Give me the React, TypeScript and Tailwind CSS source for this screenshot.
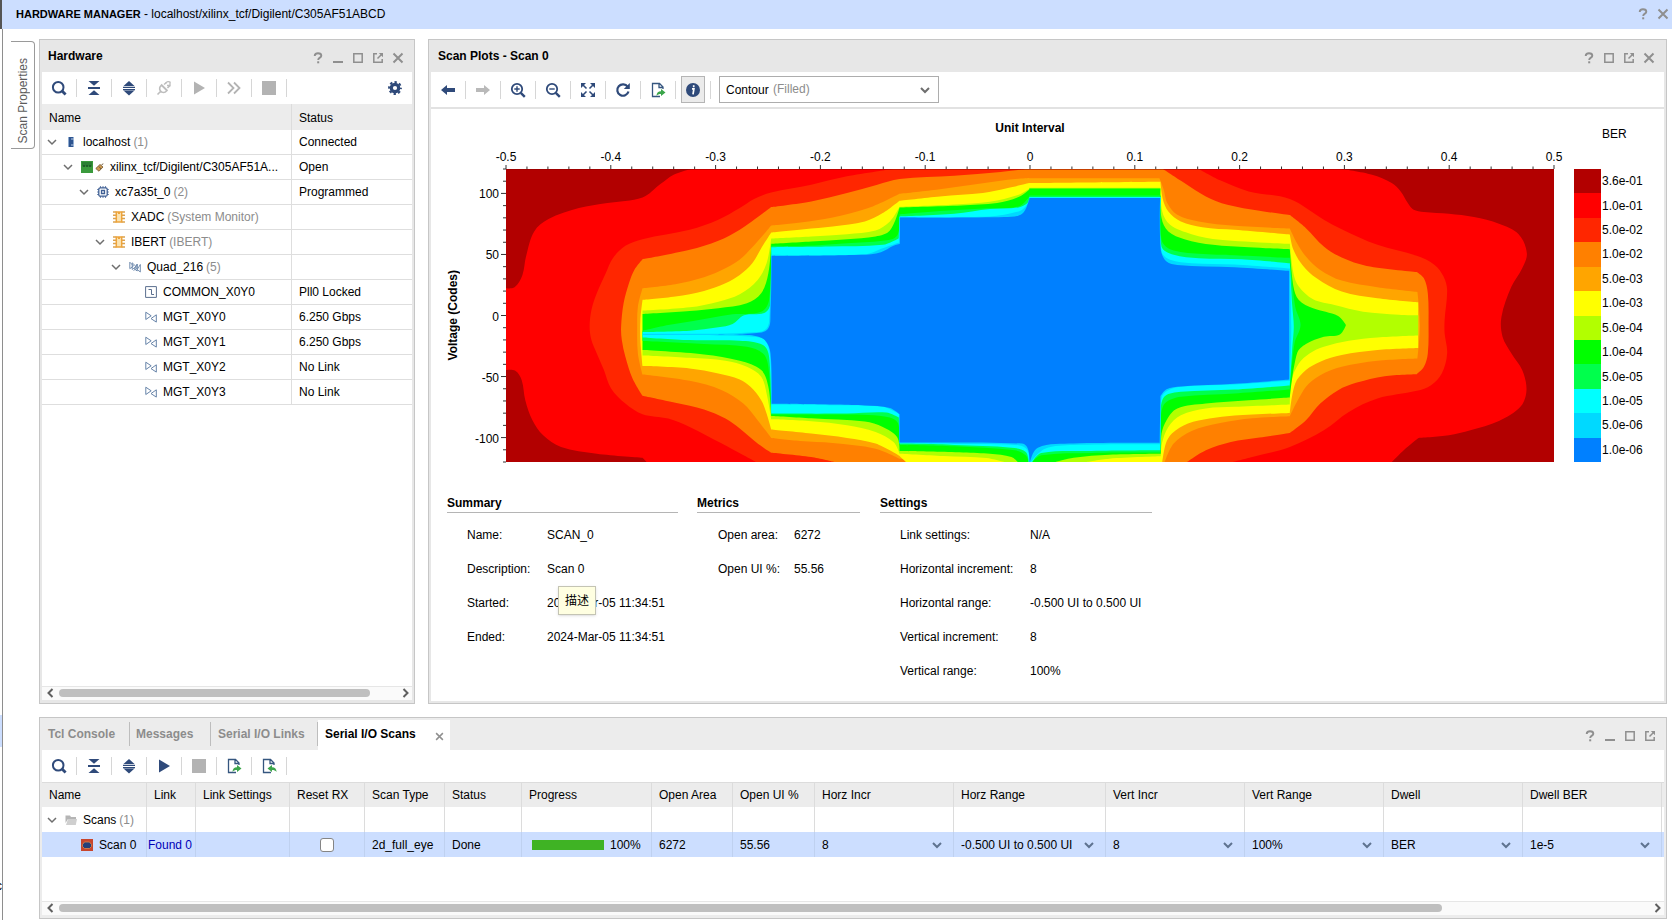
import React from "react";

/* ---------- icons ---------- */

const NAVY = "#2f4a7a";

function Svg({ size = 16, children }: { size?: number; children: React.ReactNode }) {
  return (
    <svg width={size} height={size} viewBox={`0 0 ${size} ${size}`} fill="none" aria-hidden="true" className="block shrink-0">
      {children}
    </svg>
  );
}

const SearchIcon = () => (
  <Svg>
    <circle cx="7.2" cy="7.2" r="5.3" stroke={NAVY} strokeWidth="2" />
    <path d="M10.800 10.800l3.800 3.800" stroke={NAVY} strokeWidth="2.800" />
  </Svg>
);
const CollapseIcon = () => (
  <Svg>
    <path d="M2.500 1h11l-5.500 4.800zM2.500 15h11l-5.500-4.800z" fill={NAVY} />
    <path d="M2 8h12" stroke={NAVY} strokeWidth="2" />
  </Svg>
);
const ExpandIcon = () => (
  <Svg>
    <path d="M2.500 6L8 1l5.500 5zM2.500 10.500L8 15.500l5.500-5z" fill={NAVY} />
    <path d="M2 7.300h12M2 9.600h12" stroke={NAVY} strokeWidth="1.300" />
  </Svg>
);
const LinkIcon = () => (
  <Svg>
    <path d="M5 4.500l6.500 6.500" stroke="#bdbdbd" strokeWidth="1.800" />
    <path d="M5.500 5.500C3.500 6.500 3 9 4.500 11s4.500 2 6 0M1.500 14.500l3-3M8 4.500L10.500 2.500M11.500 8L14 5.500" stroke="#bdbdbd" strokeWidth="1.600" />
    <path d="M9.500 3.500c1-2 3.500-2.500 5-.8M14 1.500v4h-3" stroke="#bdbdbd" strokeWidth="1.300" />
  </Svg>
);
const PlayIcon = ({ color }: { color: string }) => (
  <Svg>
    <path d="M3 1.500l11 6.500-11 6.500z" fill={color} />
  </Svg>
);
const FastIcon = () => (
  <Svg>
    <path d="M2 2.500L7.500 8 2 13.500M8 2.500L13.500 8 8 13.500" stroke="#b3b3b3" strokeWidth="1.800" />
  </Svg>
);
const StopIcon = () => (
  <Svg>
    <path d="M1 1h14v14H1z" fill="#b3b3b3" />
  </Svg>
);
const GearIcon = () => (
  <Svg>
    <circle cx="8" cy="8" r="3.700" stroke={NAVY} strokeWidth="3.200" />
    <circle cx="8" cy="8" r="5.900" stroke={NAVY} strokeWidth="2" strokeDasharray="2.400 2.234" strokeDashoffset="1.200" />
  </Svg>
);
const ArrowLeftIcon = () => (
  <Svg>
    <path d="M1 8l6-5v3h8v4H7v3z" fill={NAVY} />
  </Svg>
);
const ArrowRightIcon = () => (
  <Svg>
    <path d="M15 8L9 3v3H1v4h8v3z" fill="#b9b9b9" />
  </Svg>
);
const ZoomIcon = ({ plus }: { plus?: boolean }) => (
  <Svg>
    <circle cx="7" cy="7" r="5.200" stroke={NAVY} strokeWidth="1.800" />
    <path d="M10.800 10.800l4 4" stroke={NAVY} strokeWidth="2.400" />
    <path d={plus ? "M4.300 7h5.400M7 4.300v5.400" : "M4.300 7h5.400"} stroke={NAVY} strokeWidth="1.400" />
  </Svg>
);
const FitIcon = () => (
  <Svg>
    <path d="M1 1h5L1 6zM15 1v5l-5-5zM1 15v-5l5 5zM15 15h-5l5-5z" fill={NAVY} />
    <path d="M2.500 2.500l4 4M13.500 2.500l-4 4M2.500 13.500l4-4M13.500 13.500l-4-4" stroke={NAVY} strokeWidth="1.600" />
  </Svg>
);
const RefreshIcon = () => (
  <Svg>
    <path d="M12.700 4.800A5.700 5.700 0 1 0 13.500 9.500" stroke={NAVY} strokeWidth="2.200" />
    <path d="M14.800 1v6H8.800z" fill={NAVY} />
  </Svg>
);
const FileIcon = ({ into }: { into?: boolean }) => (
  <Svg>
    <path d="M13 7V5L9.500 1.500H2.500v13H10M9 1.500V5.500h4" stroke="#35567f" strokeWidth="1.300" />
    {into ? (
      <path d="M6.500 10.500l4.500-3.500v2.200c3 0 4.500 1.500 4.500 4.800-1-1.500-2.500-2-4.500-2v2z" fill="#3ba54a" />
    ) : (
      <path d="M15.500 10.500L11 7v2.200c-3 0-4.500 1.500-4.500 4.800 1-1.500 2.500-2 4.500-2v2z" fill="#3ba54a" />
    )}
  </Svg>
);
const InfoIcon = () => (
  <Svg>
    <circle cx="8" cy="8" r="7" fill={NAVY} />
    <path d="M7 6.800h1.900L8 12.300M8.700 3.200v2" stroke="#fff" strokeWidth="1.700" />
  </Svg>
);

const GRAY = "#8f8f8f";
const HelpIcon = ({ size = 12 }: { size?: number }) => (
  <svg width={size} height={size} viewBox="0 0 12 12" fill="none" aria-hidden="true">
    <path d="M2.700 4C2.700 2 4.100 1.200 6 1.200s3.300.9 3.300 2.500C9.300 5.700 6.200 5.600 6.200 8" stroke={GRAY} strokeWidth="1.900" />
    <path d="M5.200 9.300h2v2h-2z" fill={GRAY} />
  </svg>
);
const MinIcon = () => (
  <Svg size={12}>
    <path d="M1 10h10" stroke={GRAY} strokeWidth="2" />
  </Svg>
);
const MaxIcon = () => (
  <Svg size={12}>
    <path d="M1.800 1.800h8.400v8.400H1.800z" stroke={GRAY} strokeWidth="1.500" />
  </Svg>
);
const PopIcon = () => (
  <Svg size={12}>
    <path d="M5 1.800H1.800v8.400h8.400V7M5.500 6.500L9.500 2.500" stroke={GRAY} strokeWidth="1.500" />
    <path d="M6.800 1h4.200v4.200z" fill={GRAY} />
  </Svg>
);
const CloseIcon = ({ size = 12 }: { size?: number }) => (
  <svg width={size} height={size} viewBox="0 0 12 12" fill="none" aria-hidden="true">
    <path d="M1.500 1.500l9 9M10.500 1.500l-9 9" stroke={GRAY} strokeWidth="2" />
  </svg>
);
const ChevronIcon = ({ color = "#6e6e6e", width = 1.5 }: { color?: string; width?: number }) => (
  <Svg size={10}>
    <path d="M1 3l4 4 4-4" stroke={color} strokeWidth={width} />
  </Svg>
);

const HostIcon = () => (
  <Svg size={12}>
    <path d="M3 1h6v10H3z" fill="#8fabd0" />
    <path d="M4 1h4v10H4z" fill="#2f5590" />
    <path d="M6 3h3M6 9h3" stroke="#b9cde8" />
  </Svg>
);
const BoardIcon = () => (
  <Svg size={12}>
    <path d="M0 0h12v12H0z" fill="#3a9a3c" />
    <path d="M1 1h10v4.500H1z" fill="#2b7f33" />
    <path d="M2 5h2M5 5h2M8 5h2" stroke="#1c5326" strokeWidth="1.500" />
  </Svg>
);
const PlugIcon = () => (
  <Svg size={9}>
    <path d="M.8 5.500L5 1.500l3 2.500L4 8.200z" fill="#cf9a52" stroke="#7d6038" strokeWidth=".9" />
    <path d="M4 3.500l2 2.500M6.500 1.800L8.300.8" stroke="#6d5a3a" />
  </Svg>
);
const ChipIcon = () => (
  <Svg size={12}>
    <path d="M3.500.3v11.400M6 .3v11.400M8.500.3v11.400M.3 3.500h11.400M.3 6h11.400M.3 8.500h11.400" stroke="#3f5f94" strokeWidth="1.100" />
    <rect x="1.800" y="1.800" width="8.400" height="8.400" rx="1.500" fill="#fff" stroke="#3f5f94" strokeWidth="1.300" />
    <path d="M4.500 4.500h3v3h-3z" stroke="#3f5f94" strokeWidth="1.300" />
  </Svg>
);
const CoreIcon = () => (
  <Svg size={12}>
    <path d="M0 1h3.500M0 4.300h3.500M0 7.600h3.500M0 11h3.500M8.500 1H12M8.500 4.300H12M8.500 7.600H12M8.500 11H12" stroke="#dba24e" strokeWidth="1.500" />
    <path d="M3.300 1h5.400v10H3.300z" fill="#fbe3b0" stroke="#eda43c" strokeWidth="1.500" />
    <path d="M6 1v2" stroke="#eda43c" strokeWidth="2" />
  </Svg>
);
const QuadIcon = () => (
  <Svg size={12}>
    <path d="M.8 1.200v6.500L4.500 5zM3.200 1.800v6.700L7 5.500zM4.500 9.500L8 7V3.500M8.200 3v7L5.500 8zM11.300 3.500v7.500L8.200 8.500z" stroke="#6683a8" strokeWidth=".9" />
  </Svg>
);
const CommonIcon = () => (
  <Svg size={12}>
    <path d="M.6.6h10.800v10.800H.6zM3.500 3.500h3v5h2.500" stroke="#5b6f8f" strokeWidth="1" />
  </Svg>
);
const MgtIcon = () => (
  <Svg size={12}>
    <path d="M.8 1.200v7.300L6.200 4.800zM11.300 3.800v7.300L6 7.600z" stroke="#6683a8" strokeWidth="1" />
  </Svg>
);
const FolderIcon = () => (
  <Svg size={12}>
    <path d="M.5 1.500h4.500l1 1.500h5v2H3L.5 9z" fill="#b5b5b5" />
    <path d="M3 5h9l-1.200 6H1z" fill="#cfcfcf" />
  </Svg>
);
const ScanIcon = () => (
  <Svg size={12}>
    <path d="M0 0h12v12H0z" fill="#c8452c" />
    <path d="M1.500 5.500L3.500 3h5l2 2.500V7.500L8.500 9.500h-5l-2-2z" fill="#263f78" stroke="#e08a4c" strokeWidth=".8" />
  </Svg>
);

/* ---------- shared pieces ---------- */

function Tool({ label, children }: { label: string; children: React.ReactNode }) {
  return (
    <button type="button" aria-label={label} className="flex h-[18px] w-[35px] items-center justify-center border-r border-[#d6d6d6]">
      {children}
    </button>
  );
}

function WindowButtons({ items }: { items: string[] }) {
  const icons: Record<string, React.ReactNode> = {
    Help: <HelpIcon />,
    Minimize: <MinIcon />,
    Maximize: <MaxIcon />,
    Float: <PopIcon />,
    Close: <CloseIcon />,
  };
  return (
    <div className="flex gap-2 pt-1">
      {items.map((name) => (
        <button key={name} type="button" aria-label={name} className="flex size-3 items-center justify-center">
          {icons[name]}
        </button>
      ))}
    </div>
  );
}

function ScrollBar({ thumb }: { thumb: string }) {
  return (
    <div className="flex h-[14px] items-center border-t border-[#e6e6e6] bg-[#fafafa] pr-[2px] pb-px pl-1">
      <button type="button" aria-label="Scroll left" className="flex w-[13px] items-center">
        <svg width="8" height="10" viewBox="0 0 8 10" fill="none">
          <path d="M6.500 1l-4 4 4 4" stroke="#5f5f5f" strokeWidth="2" />
        </svg>
      </button>
      <div className="flex-1">
        <div className={`h-2 rounded-full bg-[#bfbfbf] ${thumb}`} />
      </div>
      <button type="button" aria-label="Scroll right" className="flex w-[13px] items-center justify-end">
        <svg width="8" height="10" viewBox="0 0 8 10" fill="none">
          <path d="M1.500 1l4 4-4 4" stroke="#5f5f5f" strokeWidth="2" />
        </svg>
      </button>
    </div>
  );
}

/* ---------- hardware tree ---------- */

type Node = { pad: string; open?: boolean; icon: React.ReactNode; name: string; note?: string; status?: string };

const TREE: Node[] = [
  { pad: "pl-[5px]", open: true, icon: <HostIcon />, name: "localhost", note: "(1)", status: "Connected" },
  {
    pad: "pl-[21px]",
    open: true,
    icon: (
      <span className="flex items-center gap-[2px]">
        <BoardIcon />
        <PlugIcon />
      </span>
    ),
    name: "xilinx_tcf/Digilent/C305AF51A...",
    status: "Open",
  },
  { pad: "pl-[37px]", open: true, icon: <ChipIcon />, name: "xc7a35t_0", note: "(2)", status: "Programmed" },
  { pad: "pl-[53px]", icon: <CoreIcon />, name: "XADC", note: "(System Monitor)" },
  { pad: "pl-[53px]", open: true, icon: <CoreIcon />, name: "IBERT", note: "(IBERT)" },
  { pad: "pl-[69px]", open: true, icon: <QuadIcon />, name: "Quad_216", note: "(5)" },
  { pad: "pl-[85px]", icon: <CommonIcon />, name: "COMMON_X0Y0", status: "Pll0 Locked" },
  { pad: "pl-[85px]", icon: <MgtIcon />, name: "MGT_X0Y0", status: "6.250 Gbps" },
  { pad: "pl-[85px]", icon: <MgtIcon />, name: "MGT_X0Y1", status: "6.250 Gbps" },
  { pad: "pl-[85px]", icon: <MgtIcon />, name: "MGT_X0Y2", status: "No Link" },
  { pad: "pl-[85px]", icon: <MgtIcon />, name: "MGT_X0Y3", status: "No Link" },
];

function TreeLabel({ pad, open, icon, name, note }: Node) {
  return (
    <div className={`flex items-center whitespace-nowrap ${pad}`}>
      {open ? (
        <button type="button" aria-label={`Collapse ${name}`} className="mr-2">
          <ChevronIcon />
        </button>
      ) : (
        <span className="mr-2 w-[10px]" />
      )}
      <span className="mr-[6px]">{icon}</span>
      <span>{name}</span>
      {note && <span className="ml-[3px] text-[#8c8c8c]">{note}</span>}
    </div>
  );
}

function HardwarePanel() {
  return (
    <section className="flex w-[376px] shrink-0 flex-col border border-[#c6c6c6] bg-[#e7e7e7] px-[2px] pb-[3px]">
      <header className="flex h-8 items-center justify-between pr-2 pl-[6px]">
        <h2 className="font-bold">Hardware</h2>
        <WindowButtons items={["Help", "Minimize", "Maximize", "Float", "Close"]} />
      </header>
      <div className="flex flex-1 flex-col bg-white">
        <div className="flex h-8 items-center">
          <Tool label="Search"><SearchIcon /></Tool>
          <Tool label="Collapse all"><CollapseIcon /></Tool>
          <Tool label="Expand all"><ExpandIcon /></Tool>
          <Tool label="Auto connect"><LinkIcon /></Tool>
          <Tool label="Run trigger"><PlayIcon color="#b3b3b3" /></Tool>
          <Tool label="Run immediate"><FastIcon /></Tool>
          <Tool label="Stop"><StopIcon /></Tool>
          <button type="button" aria-label="Settings" className="mr-[9px] ml-auto">
            <GearIcon />
          </button>
        </div>
        <table className="w-full table-fixed border-separate border-spacing-0">
          <colgroup>
            <col />
            <col className="w-[120px]" />
          </colgroup>
          <thead>
            <tr className="h-[26px] bg-[#ececec] text-left">
              <th className="border-r border-[#dcdcdc] pt-[2px] pb-0 pl-[7px] font-normal">Name</th>
              <th className="pt-[2px] pb-0 pl-[7px] font-normal">Status</th>
            </tr>
          </thead>
          <tbody>
            {TREE.map((n) => (
              <tr key={n.name} className="h-[25px]">
                <td className="border-r border-b border-[#dedede] p-0"><TreeLabel {...n} /></td>
                <td className="border-b border-[#dedede] p-0 pl-[7px]">{n.status}</td>
              </tr>
            ))}
          </tbody>
        </table>
        <div className="flex-1" />
        <ScrollBar thumb="w-[92%]" />
      </div>
    </section>
  );
}

/* ---------- contour plot ---------- */

/*
 * Each level is one closed outline running left-top, right, left-bottom.
 * A point marked * is a sharp corner; the others are smoothed.
 * The right part has its own origin, RIGHT units further along x.
 */
const RIGHT = 1484;

const LEVELS: { color: string; top: string; right: string; bottom: string }[] = [
  {
    color: "#ff0000",
    top: "46,445* 70,442 92,405 102,350 125,275 165,238 250,205 330,190 428,173 478,133 515,105 565,88*",
    right: "900,88* 985,105 1040,130 1065,155 1085,190 1100,209 1130,217 1200,222 1270,232 1340,252 1395,283 1418,340 1405,385 1375,440 1347,530 1350,590 1375,640 1405,690 1417,750 1400,800 1340,842 1260,870 1200,885 1115,893* 1075,928 1040,965*",
    bottom: "440,965* 428,952* 300,940 200,920 150,885 120,840 100,780 90,720 72,692 46,690*",
  },
  {
    color: "#ff2600",
    top: "280,560 285,510 300,460 325,400 345,355 380,318 428,298 560,270 640,240 700,205 740,178 788,158 900,135 1000,110 1130,88*",
    right: "500,88* 560,122 640,155 755,178 850,240 900,268 1000,315 1110,348 1160,375 1185,410 1195,450 1188,540 1188,580 1195,640 1180,700 1150,735 1110,752 1000,775 920,815 850,870 755,920 650,950 595,965*",
    bottom: "745,965* 650,910 560,860 500,835 428,822 380,790 340,745 320,690 300,640 285,600",
  },
  {
    color: "#ff8000",
    top: "368,560 375,490 390,430 405,390 428,358* 560,330 640,303 700,270 788,202* 900,185 1000,160 1085,135 1147,118 1300,108 1430,97 1500,88*",
    right: "400,88* 460,130 520,170 580,195 670,213 755,226* 800,265 850,320 900,353 970,378 1110,396* 1130,415 1141,460 1143,550 1141,640 1130,680 1110,702* 1020,708 940,728 890,750 840,790 800,840 755,878* 670,892 590,905 520,930 468,965*",
    bottom: "965,965* 900,950 788,937* 750,910 700,865 660,835 600,808 520,788 428,767* 400,715 380,650 370,600",
  },
  {
    color: "#ffa500",
    top: "428,445* 520,433 600,412 660,385 710,350 788,257* 870,248 960,233 1060,205 1147,162* 1250,150 1350,135 1450,120 1510,115*",
    right: "26,116* 390,116* 402,150 412,190 440,225 500,245 600,258 755,266* 775,310 800,350 840,390 900,422 1000,442 1112,456* 1119,555 1112,655* 1000,662 900,680 840,705 800,740 755,828* 650,834 560,848 480,872 430,910 405,965*",
    bottom: "1225,965* 1147,955* 1080,925 960,908 870,902 788,893* 750,840 710,790 650,750 560,722 428,703* 415,640 413,560 415,500",
  },
  {
    color: "#ffff00",
    top: "428,480* 520,470 600,453 660,430 700,405 735,370 760,325 788,278* 880,268 960,260 1050,245 1100,220 1147,183* 1260,170 1380,160 1450,145 1510,130*",
    right: "26,130* 393,126* 400,180 415,215 450,245 510,262 600,270 755,284* 765,330 790,375 830,415 900,455 1000,475 1114,487* 1114,624* 1000,630 900,645 840,665 800,690 770,730 755,818* 600,826 530,835 470,850 425,880 408,910 398,965*",
    bottom: "1165,965* 1147,947* 1080,910 1000,893 900,880 788,868* 775,820 760,780 730,740 700,718 640,700 560,685 428,678* 422,600 422,540",
  },
  {
    color: "#b2ff00",
    top: "428,512* 560,502 640,485 700,463 750,420 775,370 788,296* 900,290 1000,283 1080,272 1120,245 1147,201* 1300,194 1400,186 1480,165 1510,147*",
    right: "26,144* 393,144* 398,215 420,255 480,283 560,300 755,312* 765,400 780,440 820,478 880,495 960,515 1060,524 1114,526* 1114,586* 1000,592 920,602 850,620 810,640 780,670 760,720 755,793* 600,800 520,805 450,825 415,860 397,910 394,948* 250,955 185,965*",
    bottom: "1440,965* 1390,953 1270,947 1147,940* 1130,905 1080,875 1000,855 900,843 788,837* 775,760 760,710 720,680 660,662 560,653 428,646*",
  },
  {
    color: "#00ff00",
    top: "428,522* 560,513 640,505 720,490 760,460 780,400 788,312* 900,305 1000,298 1080,290 1120,272 1147,203* 1320,197 1420,190 1480,172 1510,149*",
    right: "26,146* 393,146* 396,235 415,275 460,298 540,315 640,322 755,328* 765,440 780,480 820,505 890,528 912,555* 895,583 850,590 800,612 775,640 755,772* 640,780 520,790 440,805 410,840 396,880 394,940* 250,943 150,952 98,965*",
    bottom: "1478,965* 1460,950 1400,940 1147,932* 1140,890 1100,860 1050,844 900,834 788,827* 780,740 760,690 700,662 600,643 428,630*",
  },
  {
    color: "#00ff4c",
    top: "428,572* 500,555 570,543 680,523 760,515 782,480 788,318* 880,318 1000,310 1100,303 1140,288 1147,224* 1260,214 1380,206 1480,200 1510,170*",
    right: "26,167* 394,167* 396,300 420,328 500,342 600,346 755,354* 770,500 785,555 768,610 755,748* 600,760 450,770 405,790 394,830* 393,937* 200,938 60,945 34,965*",
    bottom: "1508,965* 1500,945 1470,930 1300,918 1147,914* 1143,850 1120,832 1060,824 788,823* 780,680 765,640 720,620 600,612 428,603*",
  },
  {
    color: "#00ffff",
    top: "428,576* 560,572 640,562 680,552 712,526 770,518 786,490 788,322* 950,320 1100,315 1145,295* 1147,230* 1300,222 1400,208 1480,203 1505,190 1510,174*",
    right: "26,172* 394,172* 396,320 430,345 500,355 620,358 755,370* 762,500 766,560 762,620 755,736* 600,748 450,755 405,768 394,800* 393,930* 200,932 60,938 34,965*",
    bottom: "1508,965* 1500,935 1460,922 1300,914 1147,910* 1145,832* 1110,817 1000,820 788,820* 782,650 765,615 700,602 560,600 428,592*",
  },
  {
    color: "#00d9ff",
    top: "428,581* 640,581 740,577 770,570 782,545 788,345* 1050,343 1100,325 1146,308* 1147,231* 1400,230 1480,215 1500,200 1510,176*",
    right: "26,174* 394,174* 396,335 420,360 480,370 600,374 755,386* 759,560 755,722* 600,733 450,740 402,760 394,800* 393,912* 150,914 70,925 30,965*",
    bottom: "1510,965* 1505,930 1480,915 1300,911 1147,909* 1146,822* 1100,800 950,795 788,793* 784,640 770,600 740,590 640,586 428,585*",
  },
  {
    color: "#0080ff",
    top: "640,583* 740,580 778,568 786,520 789,349* 1040,345 1095,337 1130,318 1148,312* 1148,233* 1440,232 1490,222 1510,177*",
    right: "26,175* 392,175* 394,330 410,365 440,375 600,382 753,393* 753,718* 600,731 450,739 410,747 393,768* 391,908* 150,910 50,922 28,965*",
    bottom: "1511,965* 1506,925 1490,910 1147,907* 1147,822* 1120,803 1050,796 789,791* 786,640 770,600 740,587",
  },
];

type Pt = { x: number; y: number; sharp: boolean };

function parse(text: string, shift: number): Pt[] {
  return text.split(" ").map((token) => {
    const [x, y] = token.replace("*", "").split(",").map(Number);
    return { x: x + shift, y, sharp: token.endsWith("*") };
  });
}

function outline(level: (typeof LEVELS)[number]): string {
  const pts = [...parse(level.top, 0), ...parse(level.right, RIGHT), ...parse(level.bottom, 0)];
  const n = pts.length;
  const handle = (i: number, length: number, sign: number) => {
    const p = pts[i];
    if (p.sharp) return p;
    const a = pts[(i - 1 + n) % n];
    const b = pts[(i + 1) % n];
    const d = Math.hypot(b.x - a.x, b.y - a.y) || 1;
    const k = (sign * length) / (3 * d);
    return { x: p.x + (b.x - a.x) * k, y: p.y + (b.y - a.y) * k };
  };
  let d = `M${pts[0].x} ${pts[0].y}`;
  for (let i = 0; i < n; i++) {
    const j = (i + 1) % n;
    const length = Math.hypot(pts[j].x - pts[i].x, pts[j].y - pts[i].y);
    const c1 = handle(i, length, 1);
    const c2 = handle(j, length, -1);
    d += `C${c1.x.toFixed(1)} ${c1.y.toFixed(1)} ${c2.x.toFixed(1)} ${c2.y.toFixed(1)} ${pts[j].x} ${pts[j].y}`;
  }
  return d + "Z";
}

const X_LABELS = ["-0.5", "-0.4", "-0.3", "-0.2", "-0.1", "0", "0.1", "0.2", "0.3", "0.4", "0.5"];
const Y_LABELS = ["100", "50", "0", "-50", "-100"];

const LEGEND = [
  { label: "3.6e-01", color: "bg-[#b20000]" },
  { label: "1.0e-01", color: "bg-[#ff0000]" },
  { label: "5.0e-02", color: "bg-[#ff2600]" },
  { label: "1.0e-02", color: "bg-[#ff8000]" },
  { label: "5.0e-03", color: "bg-[#ffa500]" },
  { label: "1.0e-03", color: "bg-[#ffff00]" },
  { label: "5.0e-04", color: "bg-[#b2ff00]" },
  { label: "1.0e-04", color: "bg-[#00ff00]" },
  { label: "5.0e-05", color: "bg-[#00ff4c]" },
  { label: "1.0e-05", color: "bg-[#00ffff]" },
  { label: "5.0e-06", color: "bg-[#00d9ff]" },
  { label: "1.0e-06", color: "bg-[#0080ff]" },
];

function EyePlot() {
  return (
    <div className="grid grid-cols-[75px_1fr_110px] leading-4">
      <div />
      <div className="pt-[11px]">
        <h3 className="text-center font-bold">Unit Interval</h3>
        <div className="mt-[13px] flex justify-between">
          {X_LABELS.map((label) => (
            <span key={label} className="flex w-0 justify-center whitespace-nowrap">{label}</span>
          ))}
        </div>
        <svg className="block h-[4px] w-full" viewBox="0 0 50 4" preserveAspectRatio="none" overflow="visible" aria-hidden="true">
          {Array.from({ length: 51 }, (_, i) => (
            <path key={i} d={`M${i} ${i % 5 === 0 ? 0 : 1.5}V4`} stroke="#333" vectorEffect="non-scaling-stroke" />
          ))}
        </svg>
      </div>
      <div className="pt-[17px] pl-[48px]">BER</div>

      <div className="flex">
        <div className="flex w-[46px] items-center justify-center">
          <h3 className="rotate-180 font-bold whitespace-nowrap [writing-mode:vertical-rl]">Voltage (Codes)</h3>
        </div>
        <div className="flex flex-1 flex-col justify-between pt-[17px] pr-[2px] pb-[15px] text-right">
          {Y_LABELS.map((label) => (
            <span key={label}>{label}</span>
          ))}
        </div>
        <svg className="block h-full w-[5px]" viewBox="0 0 5 24" preserveAspectRatio="none" overflow="visible" aria-hidden="true">
          {Array.from({ length: 25 }, (_, i) => (
            <path key={i} d={`M${(i - 2) % 5 === 0 ? 0 : 2} ${i}H5`} stroke="#333" vectorEffect="non-scaling-stroke" />
          ))}
        </svg>
      </div>
      <svg className="block h-[293px] w-full bg-[#b20000]" viewBox="46 88 2932 877" preserveAspectRatio="none" role="img" aria-label="Eye scan contour">
        {LEVELS.map((level) => (
          <path key={level.color} d={outline(level)} fill={level.color} />
        ))}
        <path d="M46 89H2978" stroke="#8a0000" strokeOpacity="0.6" vectorEffect="non-scaling-stroke" />
      </svg>
      <ul className="flex flex-col pl-5">
        {LEGEND.map(({ label, color }) => (
          <li key={label} className="flex flex-1 items-center">
            <span className={`h-full w-[27px] ${color}`} />
            <span className="pl-px">{label}</span>
          </li>
        ))}
      </ul>
    </div>
  );
}

/* ---------- scan plot panel ---------- */

function Facts({ title, box, columns, rows }: { title: string; box: string; columns: string; rows: [string, React.ReactNode][] }) {
  return (
    <section className={box}>
      <h3 className="border-b border-[#b5b5b5] pb-px font-bold">{title}</h3>
      <dl className={`mt-[14px] grid gap-y-[18px] whitespace-nowrap ${columns}`}>
        {rows.map(([term, value]) => (
          <React.Fragment key={term}>
            <dt>{term}</dt>
            <dd>{value}</dd>
          </React.Fragment>
        ))}
      </dl>
    </section>
  );
}

function PlotPanel() {
  return (
    <section className="flex min-w-0 flex-1 flex-col border border-[#c6c6c6] bg-[#e7e7e7] px-[2px] pb-[2px]">
      <header className="flex h-8 items-center justify-between pr-[9px] pl-[7px]">
        <h2 className="font-bold">Scan Plots - Scan 0</h2>
        <WindowButtons items={["Help", "Maximize", "Float", "Close"]} />
      </header>
      <div className="flex-1 bg-white">
        <div className="flex h-[37px] items-center border-b-2 border-[#e2e2e2]">
          <Tool label="Previous"><ArrowLeftIcon /></Tool>
          <Tool label="Next"><ArrowRightIcon /></Tool>
          <Tool label="Zoom in"><ZoomIcon plus /></Tool>
          <Tool label="Zoom out"><ZoomIcon /></Tool>
          <Tool label="Zoom fit"><FitIcon /></Tool>
          <Tool label="Refresh"><RefreshIcon /></Tool>
          <Tool label="Export"><FileIcon /></Tool>
          <Tool label="Information">
            <span className="flex h-[27px] w-6 shrink-0 items-center justify-center border border-[#b5b5b5] bg-[#ebebeb]">
              <InfoIcon />
            </span>
          </Tool>
          <div className="relative ml-2">
            <select aria-label="Plot type" className="block h-[27px] w-[220px] appearance-none border border-[#adadad] bg-white pl-[6px]">
              <option>Contour</option>
            </select>
            <span className="pointer-events-none absolute top-[5px] left-[54px] text-[#8c8c8c]">(Filled)</span>
            <span className="pointer-events-none absolute top-[9px] right-[9px]">
              <ChevronIcon width={2} />
            </span>
          </div>
        </div>
        <EyePlot />
        <div className="mt-[33px] flex pb-[22px] pl-4 leading-4">
          <Facts
            title="Summary"
            box="w-[231px]"
            columns="grid-cols-[80px_1fr] pl-5"
            rows={[
              ["Name:", "SCAN_0"],
              ["Description:", "Scan 0"],
              [
                "Started:",
                <span className="relative">
                  2024-Mar-05 11:34:51
                  <span role="tooltip" className="absolute -top-[10px] left-[11px] flex h-[29px] w-[38px] items-center justify-center border border-[#c4c4b4] bg-[#ffffe1] font-['Liberation_Sans','Noto_Sans_CJK_SC',sans-serif] shadow-sm">
                    描述
                  </span>
                </span>,
              ],
              ["Ended:", "2024-Mar-05 11:34:51"],
            ]}
          />
          <Facts title="Metrics" box="ml-[19px] w-[163px]" columns="grid-cols-[76px_1fr] pl-[21px]" rows={[["Open area:", "6272"], ["Open UI %:", "55.56"]]} />
          <Facts
            title="Settings"
            box="ml-5 w-[272px]"
            columns="grid-cols-[130px_1fr] pl-5"
            rows={[
              ["Link settings:", "N/A"],
              ["Horizontal increment:", "8"],
              ["Horizontal range:", "-0.500 UI to 0.500 UI"],
              ["Vertical increment:", "8"],
              ["Vertical range:", "100%"],
            ]}
          />
        </div>
      </div>
    </section>
  );
}

/* ---------- scans panel ---------- */

const COLUMNS: [string, string][] = [
  ["Name", "w-[105px]"],
  ["Link", "w-[49px]"],
  ["Link Settings", "w-[94px]"],
  ["Reset RX", "w-[75px]"],
  ["Scan Type", "w-[80px]"],
  ["Status", "w-[77px]"],
  ["Progress", "w-[130px]"],
  ["Open Area", "w-[81px]"],
  ["Open UI %", "w-[82px]"],
  ["Horz Incr", "w-[139px]"],
  ["Horz Range", "w-[152px]"],
  ["Vert Incr", "w-[139px]"],
  ["Vert Range", "w-[139px]"],
  ["Dwell", "w-[139px]"],
  ["Dwell BER", "w-[139px]"],
];

function Cell({ children, flush }: { children?: React.ReactNode; flush?: boolean }) {
  return (
    <td className={`border-r border-[#dcdcdc] p-0 whitespace-nowrap in-data-selected:border-[#bfd1f0] ${flush ? "" : "pl-[7px]"}`}>{children}</td>
  );
}

function CellSelect({ label, value }: { label: string; value: string }) {
  return (
    <div className="relative flex items-center">
      <select aria-label={label} className="w-full appearance-none bg-transparent">
        <option>{value}</option>
      </select>
      <span className="pointer-events-none absolute right-[11px]">
        <ChevronIcon color="#5f7390" width={2} />
      </span>
    </div>
  );
}

function Tab({ children, divider }: { children: React.ReactNode; divider: string }) {
  return (
    <button type="button" role="tab" aria-selected="false" className={`h-6 border-r border-[#bdbdbd] text-left font-bold text-[#8c8c8c] ${divider}`}>
      {children}
    </button>
  );
}

function ScansPanel() {
  return (
    <section className="border border-[#c6c6c6] bg-[#ececec] px-[2px] pb-[3px]">
      <header className="flex h-8 items-center justify-between pr-2">
        <div role="tablist" className="flex items-center self-stretch">
          <Tab divider="w-[88px] pl-[6px]">Tcl Console</Tab>
          <Tab divider="w-[81px] pl-[6px]">Messages</Tab>
          <Tab divider="w-[107px] pl-[7px]">Serial I/O Links</Tab>
          <div className="mt-[2px] flex items-center self-stretch bg-white pr-[5px] pl-[7px]">
            <button type="button" role="tab" aria-selected="true" className="w-[110px] pb-[2px] text-left font-bold">
              Serial I/O Scans
            </button>
            <button type="button" aria-label="Close tab" className="mt-[3px] flex size-[10px]">
              <CloseIcon size={9} />
            </button>
          </div>
        </div>
        <WindowButtons items={["Help", "Minimize", "Maximize", "Float"]} />
      </header>
      <div className="bg-white">
        <div className="flex h-8 items-center">
          <Tool label="Search"><SearchIcon /></Tool>
          <Tool label="Collapse all"><CollapseIcon /></Tool>
          <Tool label="Expand all"><ExpandIcon /></Tool>
          <Tool label="Run scan"><PlayIcon color={NAVY} /></Tool>
          <Tool label="Stop"><StopIcon /></Tool>
          <Tool label="Write scan data"><FileIcon /></Tool>
          <Tool label="Read scan data"><FileIcon into /></Tool>
        </div>
        <table className="w-full table-fixed border-separate border-spacing-0 border-t border-[#dcdcdc]">
          <colgroup>
            {COLUMNS.map(([name, width]) => (
              <col key={name} className={width} />
            ))}
            <col />
          </colgroup>
          <thead>
            <tr className="h-6 bg-[#ececec] text-left">
              {COLUMNS.map(([name]) => (
                <th key={name} className="border-r border-[#dcdcdc] p-0 pl-[7px] font-normal whitespace-nowrap">{name}</th>
              ))}
              <th className="p-0" />
            </tr>
          </thead>
          <tbody>
            <tr className="h-[25px]">
              <Cell flush>
                <TreeLabel pad="pl-[5px]" open icon={<FolderIcon />} name="Scans" note="(1)" />
              </Cell>
              {COLUMNS.slice(1).map(([name]) => (
                <Cell key={name} />
              ))}
              <td />
            </tr>
            <tr data-selected="true" className="h-[25px] bg-[#ccdeff]">
              <Cell flush>
                <TreeLabel pad="pl-[21px]" icon={<ScanIcon />} name="Scan 0" />
              </Cell>
              <Cell flush>
                <a href="#link-0" className="pl-px text-[#0000b8]">Found 0</a>
              </Cell>
              <Cell />
              <Cell flush>
                <input type="checkbox" aria-label="Reset RX" className="mx-auto block size-[14px] appearance-none rounded-[3px] border border-[#858585] bg-white" />
              </Cell>
              <Cell>2d_full_eye</Cell>
              <Cell>Done</Cell>
              <Cell>
                <div className="flex items-center gap-[6px] pl-[3px]">
                  <div role="progressbar" aria-label="Scan progress" aria-valuenow={100} className="h-[10px] w-[72px] bg-[#3fb324]" />
                  <span>100%</span>
                </div>
              </Cell>
              <Cell>6272</Cell>
              <Cell>55.56</Cell>
              <Cell><CellSelect label="Horz Incr" value="8" /></Cell>
              <Cell><CellSelect label="Horz Range" value="-0.500 UI to 0.500 UI" /></Cell>
              <Cell><CellSelect label="Vert Incr" value="8" /></Cell>
              <Cell><CellSelect label="Vert Range" value="100%" /></Cell>
              <Cell><CellSelect label="Dwell" value="BER" /></Cell>
              <Cell><CellSelect label="Dwell BER" value="1e-5" /></Cell>
              <td />
            </tr>
          </tbody>
        </table>
        <div className="h-11" />
        <ScrollBar thumb="w-[87%]" />
      </div>
    </section>
  );
}

/* ---------- page ---------- */

export default function App() {
  return (
    <div className="flex min-h-screen flex-col bg-white font-['Liberation_Sans',Arial,sans-serif] text-[12px] leading-4 text-black">
      <header className="flex h-[29px] items-center justify-between border-l-2 border-[#555] bg-[#ccdeff] pr-[3px] pb-px pl-[14px]">
        <h1>
          <span className="text-[11px] font-bold">HARDWARE MANAGER</span> - localhost/xilinx_tcf/Digilent/C305AF51ABCD
        </h1>
        <div className="flex gap-2">
          <button type="button" aria-label="Help" className="flex"><HelpIcon /></button>
          <button type="button" aria-label="Close" className="flex"><CloseIcon /></button>
        </div>
      </header>
      <div className="flex flex-1">
        <div className="flex w-[3px] flex-col justify-end border-r border-[#8e8e8e]">
          <div className="h-8 bg-[#ccdeff]" />
          <div className="h-[131px]" />
          <div className="flex h-4 justify-end overflow-hidden">
            <span>c</span>
          </div>
          <div className="h-7" />
        </div>
        <button type="button" className="mt-3 ml-2 flex h-[108px] w-6 shrink-0 items-end justify-center rounded-r-[4px] border border-l-0 border-[#9a9a9a] pb-[5px] pl-px text-[#5c5c5c]">
          <span className="rotate-180 whitespace-nowrap [writing-mode:vertical-rl]">Scan Properties</span>
        </button>
        <main className="flex min-w-0 flex-1 flex-col gap-[13px] pt-[10px] pr-[5px] pb-[3px] pl-1">
          <div className="flex flex-1 gap-[13px]">
            <HardwarePanel />
            <PlotPanel />
          </div>
          <ScansPanel />
        </main>
      </div>
    </div>
  );
}
